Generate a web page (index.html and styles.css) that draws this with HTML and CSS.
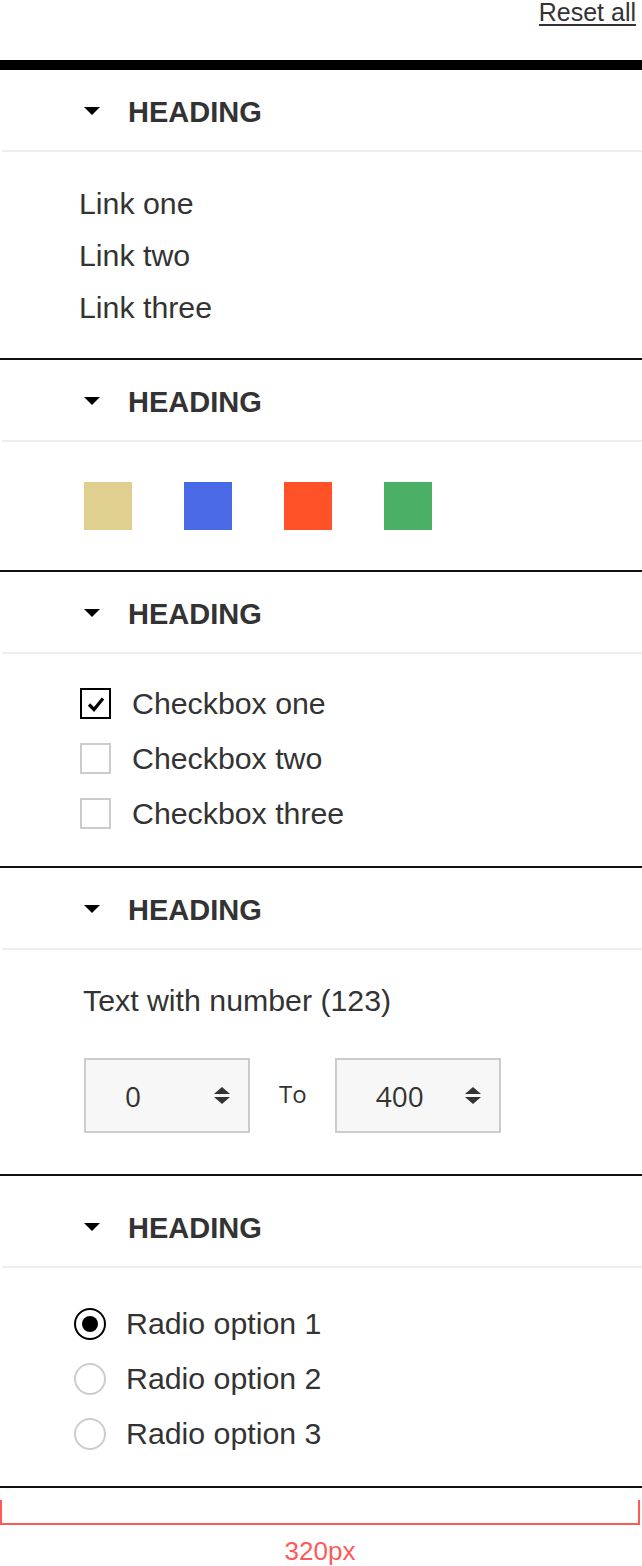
FILE: index.html
```html
<!DOCTYPE html>
<html>
<head>
<meta charset="utf-8">
<link rel="stylesheet" href="styles.css">
</head>
<body>
<div class="page">
  <div class="top"><a class="reset">Reset all</a></div>
  <div class="topbar"></div>

  <section class="sec">
    <div class="head"><span class="tri"></span><span class="htext">HEADING</span></div>
    <div class="body links">
      <div class="link">Link one</div>
      <div class="link">Link two</div>
      <div class="link">Link three</div>
    </div>
  </section>

  <section class="sec">
    <div class="head"><span class="tri"></span><span class="htext">HEADING</span></div>
    <div class="body swatches">
      <span class="sw sw-tan"></span>
      <span class="sw sw-blue"></span>
      <span class="sw sw-red"></span>
      <span class="sw sw-green"></span>
    </div>
  </section>

  <section class="sec">
    <div class="head"><span class="tri"></span><span class="htext">HEADING</span></div>
    <div class="body checks">
      <div class="crow"><span class="cbox on"><svg width="20" height="18" viewBox="0 0 20 18"><polyline points="3,9.5 8,14.5 17,3.5" fill="none" stroke="#000" stroke-width="3.2"/></svg></span><span class="clabel">Checkbox one</span></div>
      <div class="crow"><span class="cbox"></span><span class="clabel">Checkbox two</span></div>
      <div class="crow"><span class="cbox"></span><span class="clabel">Checkbox three</span></div>
    </div>
  </section>

  <section class="sec">
    <div class="head"><span class="tri"></span><span class="htext">HEADING</span></div>
    <div class="body nums">
      <div class="ntext">Text with number (123)</div>
      <div class="nrow">
        <div class="nbox"><span class="nval">0</span><span class="arrows"><span class="up"></span><span class="down"></span></span></div>
        <span class="to">To</span>
        <div class="nbox"><span class="nval">400</span><span class="arrows"><span class="up"></span><span class="down"></span></span></div>
      </div>
    </div>
  </section>

  <section class="sec sec-last">
    <div class="head"><span class="tri"></span><span class="htext">HEADING</span></div>
    <div class="body radios">
      <div class="rrow"><span class="rad on"></span><span class="rlabel">Radio option 1</span></div>
      <div class="rrow"><span class="rad"></span><span class="rlabel">Radio option 2</span></div>
      <div class="rrow"><span class="rad"></span><span class="rlabel">Radio option 3</span></div>
    </div>
  </section>

  <div class="bracket"></div>
  <div class="measure">320px</div>
</div>
</body>
</html>
```
FILE: styles.css
```css
html, body {
  margin: 0;
  padding: 0;
  background: #fff;
}
body {
  font-family: "Liberation Sans", Arial, sans-serif;
  color: #333;
}
.page {
  width: 642px;
}
.top {
  height: 60px;
  display: flex;
  justify-content: flex-end;
  align-items: flex-start;
}
.reset {
  font-size: 25px;
  line-height: 23px;
  color: #333;
  border-bottom: 2px solid #333;
  margin-right: 6px;
  padding-top: 1px;
}
.topbar {
  height: 10px;
  background: #000;
}
.sec {
  border-bottom: 2px solid #111;
}
.head {
  height: 80px;
  margin-left: 2px;
  padding-left: 82px;
  display: flex;
  align-items: center;
  border-bottom: 2px solid #eee;
}
.sec-last .head {
  margin-top: 10px;
}
.tri {
  width: 0;
  height: 0;
  border-left: 8px solid transparent;
  border-right: 8px solid transparent;
  border-top: 8px solid #000;
  margin-right: 28px;
  margin-top: 1px;
}
.htext {
  font-size: 29px;
  font-weight: bold;
  color: #333;
  line-height: 32px;
  margin-top: 3px;
}
.links {
  padding: 26px 0 24px 79px;
}
.link {
  font-size: 30.3px;
  line-height: 52px;
}
.swatches {
  display: flex;
  gap: 52px;
  padding: 40px 0 40px 84px;
}
.sw {
  width: 48px;
  height: 48px;
}
.sw-tan { background: #e0d090; }
.sw-blue { background: #4a69e6; }
.sw-red { background: #ff5229; }
.sw-green { background: #4caf66; }
.checks {
  padding: 22px 0 25px 80px;
}
.crow {
  height: 55px;
  display: flex;
  align-items: center;
}
.cbox {
  width: 31px;
  height: 31px;
  box-sizing: border-box;
  border: 2px solid #ccc;
  display: flex;
  align-items: center;
  justify-content: center;
  margin-right: 21px;
}
.cbox.on {
  border-color: #000;
}
.clabel {
  font-size: 30.3px;
}
.nums {
  padding: 33px 0 41px 83px;
}
.ntext {
  font-size: 30.3px;
  line-height: 36px;
}
.nrow {
  margin-top: 39px;
  display: flex;
  align-items: center;
  padding-left: 1px;
}
.nbox {
  width: 166px;
  height: 75px;
  box-sizing: border-box;
  border: 2px solid #ccc;
  background: #f7f7f7;
  display: flex;
  align-items: center;
  justify-content: space-between;
  padding: 0 18px 0 39px;
  font-family: "Open Sans", sans-serif;
}
.nval {
  font-size: 28px;
  color: #333;
}
.arrows {
  display: flex;
  flex-direction: column;
  gap: 3px;
}
.up, .down {
  width: 0;
  height: 0;
  border-left: 8px solid transparent;
  border-right: 8px solid transparent;
}
.up { border-bottom: 7px solid #333; }
.down { border-top: 7px solid #333; }
.to {
  font-family: "Open Sans", sans-serif;
  font-size: 24px;
  color: #333;
  margin: 0 28px 4px 29px;
}
.radios {
  padding: 28px 0 25px 74px;
}
.rrow {
  height: 55px;
  display: flex;
  align-items: center;
}
.rad {
  width: 32px;
  height: 32px;
  box-sizing: border-box;
  border: 2px solid #ccc;
  border-radius: 50%;
  margin-right: 20px;
  display: flex;
  align-items: center;
  justify-content: center;
}
.rad.on {
  border-color: #000;
}
.rad.on::after {
  content: "";
  width: 16px;
  height: 16px;
  border-radius: 50%;
  background: #000;
}
.rlabel {
  font-size: 30.3px;
}
.bracket {
  margin-top: 12px;
  width: 640px;
  height: 25px;
  box-sizing: border-box;
  border: 2px solid #ff5a5a;
  border-top: none;
}
.measure {
  margin-top: 11px;
  width: 640px;
  text-align: center;
  font-size: 26px;
  line-height: 30px;
  color: #ff5a5a;
}
```
